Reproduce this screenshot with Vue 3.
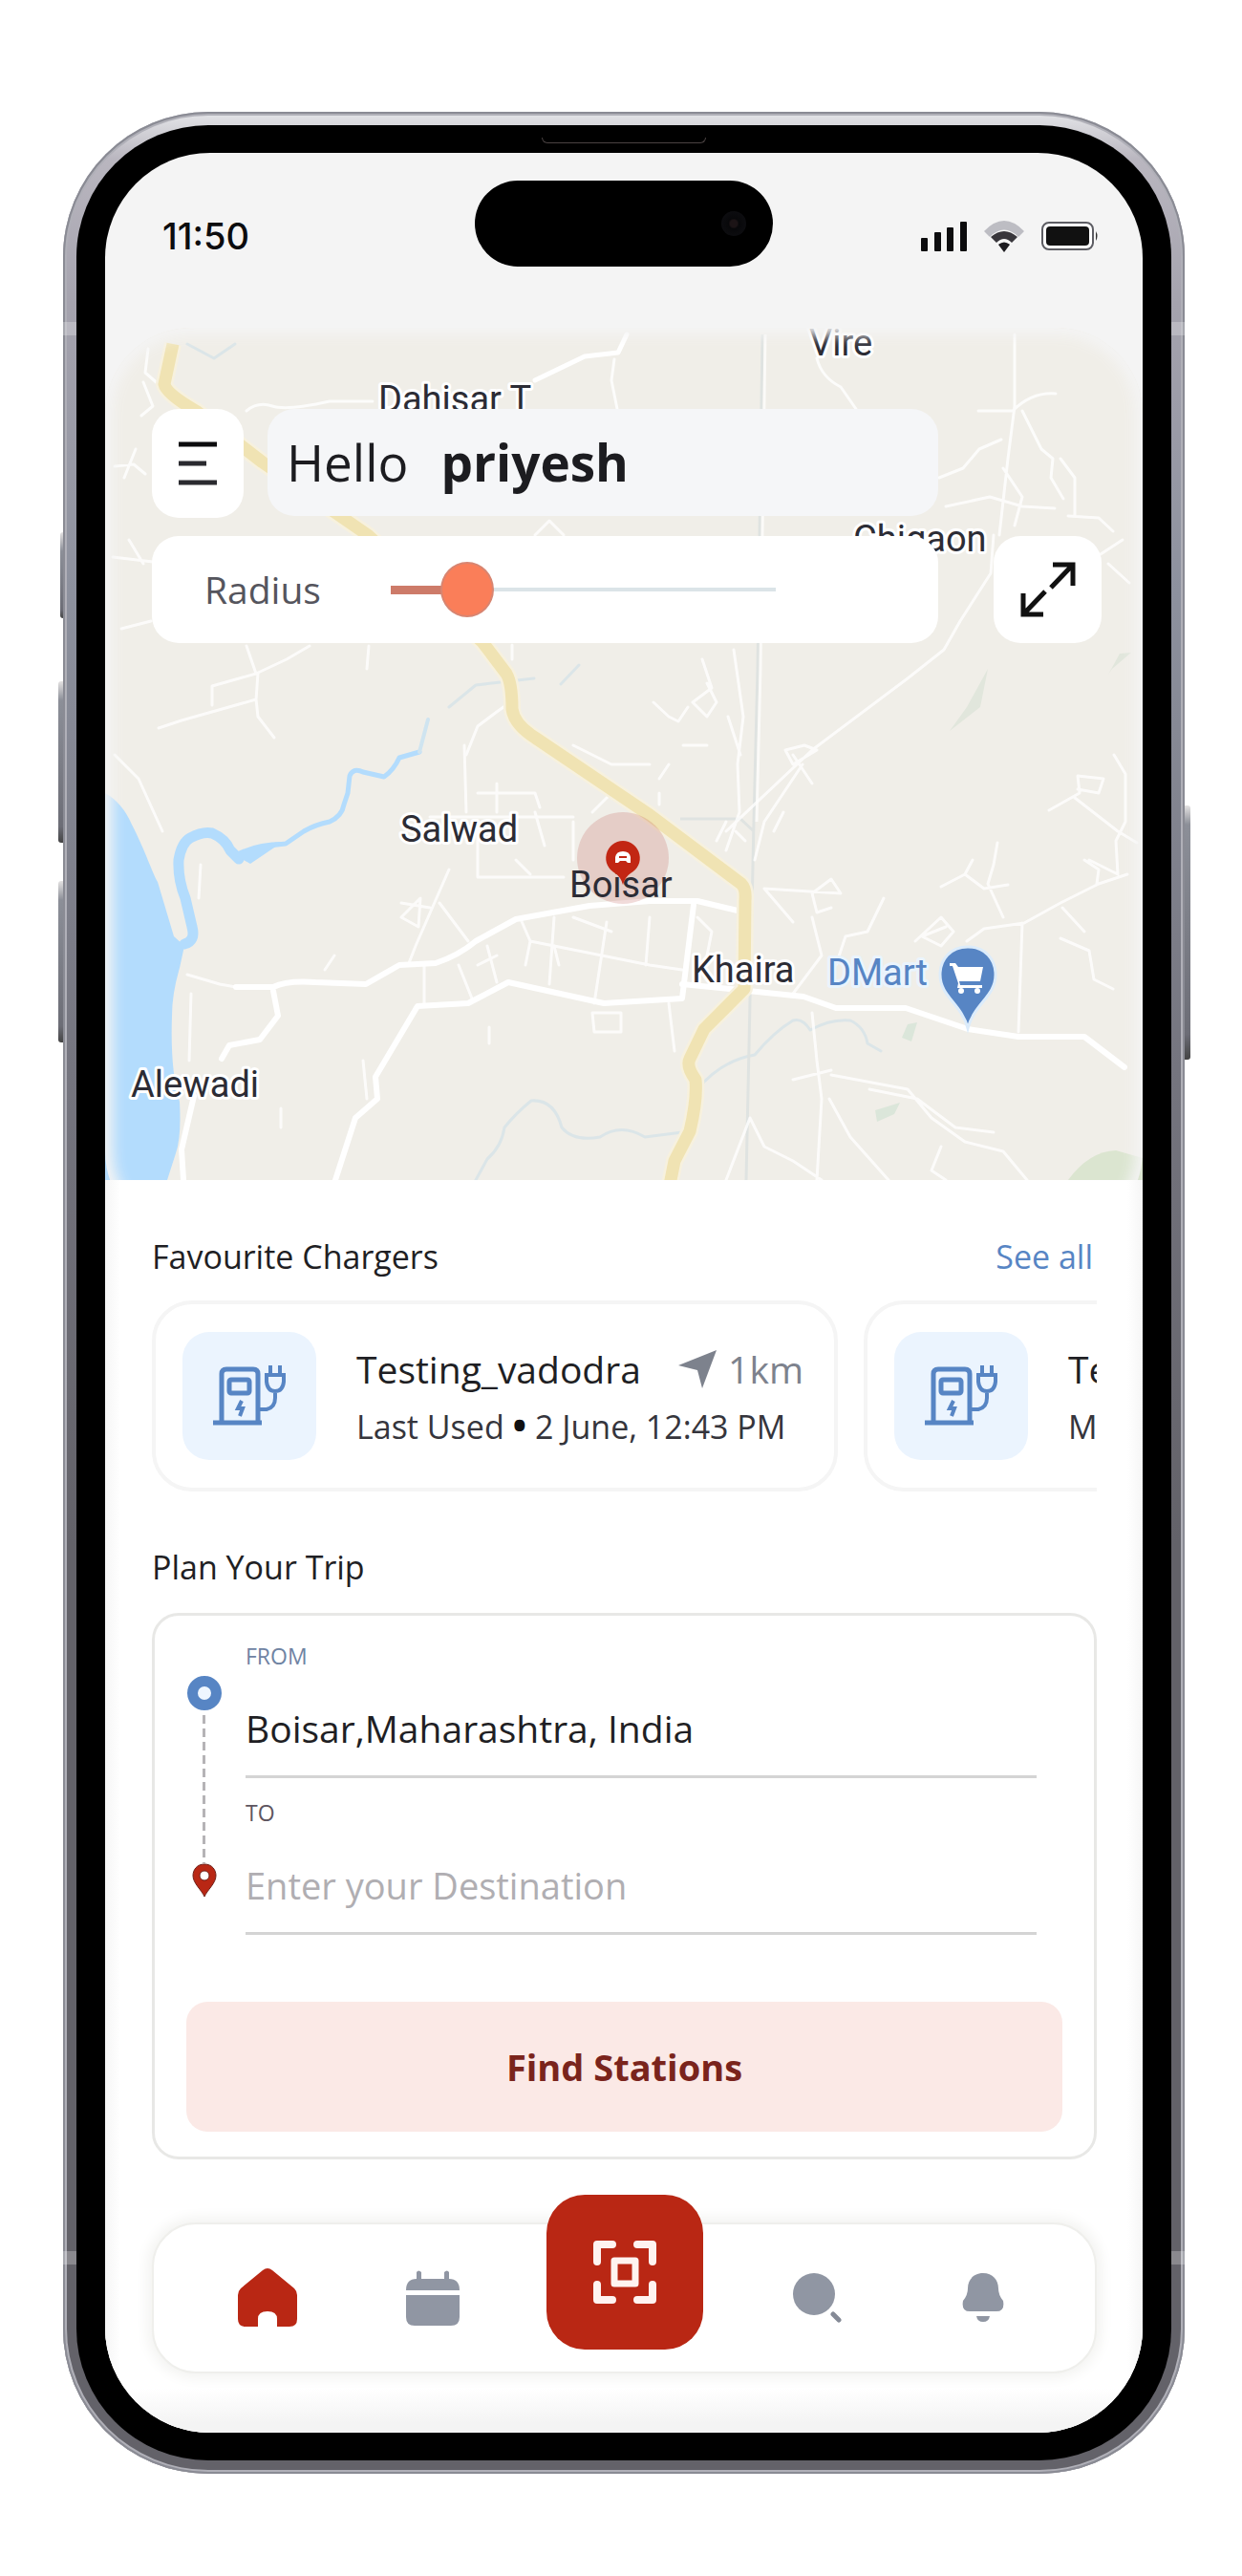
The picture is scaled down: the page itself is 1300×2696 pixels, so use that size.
<script setup>
import { ref } from 'vue'

const radius = ref(15)
const from = ref('Boisar,Maharashtra, India')
const to = ref('')

const chargers = [
  { name: 'Testing_vadodra', distance: '1km', detail: 'Last Used', when: '2 June, 12:43 PM' },
  { name: 'Testing_mumbai', distance: '3km', detail: 'Mostly Used', when: '1 June, 10:20 AM' },
]
</script>

<template>
  <div class="page">
    <div class="phone">
      <span class="side-key mute"></span>
      <span class="side-key vol-up"></span>
      <span class="side-key vol-down"></span>
      <span class="side-key power"></span>
      <span class="band band-top"></span>
      <span class="band band-bottom"></span>
      <div class="bezel">
        <span class="speaker"></span>
        <main class="screen">
          <header class="status">
            <time class="clock">11:50</time>
            <div class="island"><span class="lens"></span></div>
            <div class="indicators">
              <svg width="48" height="32" viewBox="0 0 48 32" fill="#0c0c0e">
                <rect x="0" y="18" width="7" height="14" rx="1" /><rect x="14" y="12" width="7" height="20" rx="1" /><rect x="27" y="7" width="7" height="25" rx="1" /><rect x="41" y="1" width="7" height="31" rx="1" />
              </svg>
              <svg width="44" height="34" viewBox="0 0 44 34">
                <path d="M1 12Q22-10 43 12L37 18Q22 3 7 18Z" fill="#bdbdc3" />
                <path d="M8 18Q22 6 36 18L30 24Q22 16 14 24Z" fill="#38363b" />
                <path d="M16 26Q22 21 28 26L22 34Z" fill="#1c1b1f" />
              </svg>
              <svg width="60" height="32" viewBox="0 0 60 32">
                <rect x="1" y="2" width="53" height="28" rx="7" fill="#fff" stroke="#5d5d63" stroke-width="2" />
                <rect x="5" y="6" width="45" height="20" rx="4" fill="#111" />
                <path d="M57 11Q60 16 57 21Z" fill="#333" />
              </svg>
            </div>
          </header>

          <section class="map">
            <svg class="map-art" viewBox="110 343 1086 892" preserveAspectRatio="xMidYMid slice">
              <rect x="110" y="343" width="1086" height="892" fill="#f0eee8" />
              <path d="M1118 1235Q1140 1205 1168 1204L1196 1212V1235Z" fill="#dbe5d0" />
              <path d="M916 1162L942 1154L936 1166L918 1174ZM950 1072L960 1070L954 1090L944 1086Z" fill="#dbe6da" />
              <path d="M1034 700L1026 740L994 765L1012 740ZM1184 683L1164 700L1160 706L1172 684Z" fill="#e1e6dc" />
              <path d="M110 830Q128 840 138 863C152 890 160 915 165 923L182 980L193 990L188 1013Q180 1040 180 1063Q178 1120 188 1153Q190 1190 184 1207L175 1235H110Z" fill="#b3dcfd" />
              <g fill="none" stroke="#b3dcfd" stroke-linecap="round" stroke-linejoin="round">
                <path stroke-width="11" d="M193 988Q205 985 201 970L194 940Q186 920 187 900Q190 882 199 877Q212 870 222 872Q236 878 241 890L250 899" />
                <path stroke-width="5" d="M250 899Q275 884 299 883L318 870Q330 863 345 860Q358 854 360 842L364 830L366 812Q370 803 380 808L402 813Q412 806 418 793L439 787" />
                <path stroke-width="4" stroke="#cfe4f0" d="M439 787L448 753" />
                <path stroke-width="3" stroke="#dbe5e8" d="M470 740L498 717L559 710M587 716L606 696M196 360L224 375L246 360M498 1235L510 1213Q525 1200 528 1180Q540 1165 556 1152Q580 1150 588 1180Q600 1195 628 1190Q650 1175 675 1190L722 1184M730 1140Q755 1110 790 1104Q810 1080 830 1068Q840 1065 848 1078Q870 1066 890 1068Q905 1075 908 1092L922 1100" />
              </g>
              <path d="M244 894Q266 881 296 881L262 904Z" fill="#b3dcfd" />
              <path d="M798 350L793 700L789 860L781 1235M712 857H775L789 870" fill="none" stroke="#dfe3e1" stroke-width="3" />
              <path d="M801 350L796 700L792 860" fill="none" stroke="#fff" stroke-width="3" opacity=".7" />
              <g fill="none" stroke="#fff" stroke-width="3" stroke-linejoin="round" stroke-linecap="round" opacity=".8">
                <path d="M155 365L152 390L168 404M150 400L160 425L148 435M120 488L140 486L152 496M142 470L130 500M258 430Q270 420 285 425Q300 430 345 420H390M643 376L640 398L646 428M118 583L160 588M135 565L150 590M127 658L158 650M258 676L268 705L222 718L222 738M268 705L300 690L324 676M166 762L190 754L268 732L270 705M268 732L270 750L287 772M386 676L384 700M536 675V690M488 790L500 760L520 745L534 735M560 560L575 545L590 560M855 375Q860 395 880 405L896 428M1062 350V425L1055 480L1046 560M1024 430H1060Q1080 410 1105 412M1070 430L1090 470L1102 480L1100 500L1113 522M1110 480L1125 500L1125 540M1048 460L1025 470L1008 490L983 500M990 530L1036 520L1070 530L1104 532M1050 490L1070 520L1062 550M1118 540L1150 542L1165 556M1152 580L1175 565M1160 590L1182 610" />
                <path d="M1040 560L1037 600L1005 650L988 680L950 710L850 785L760 870M735 690L745 720L725 735L740 750L750 735L740 715M720 740L710 755L700 750L684 735M768 680L778 750L772 800L774 850L760 890M762 750L775 790M120 790L145 815L170 870M210 905L208 940M486 780L488 850M450 855H600M500 860V918H590M470 910L435 990L428 1008M420 945L450 950M460 945L490 985M440 940L438 970L420 960ZM480 1010L494 1045M444 1010V1050M510 990L520 1028M545 962L555 985L680 1010L714 1015M635 965L622 1050M555 985L550 1010M580 960L575 1030M680 960L676 1010M840 800L800 860L790 900M830 790L850 820M855 785L830 800L822 785L842 780Z" />
                <path d="M1166 790L1178 810L1178 860L1168 880L1170 915M1125 835L1170 870L1190 882M1098 848L1130 830L1128 812L1155 815L1150 830L1128 826M1012 985L1030 972L1072 966L1110 945L1150 925L1180 915M1135 900L1150 910L1148 925M1140 900L1170 915M1044 882L1040 905L1034 925L1050 960M985 928L1010 915L1030 930L1055 926M1010 915L1018 900M1112 950L1135 975M1110 982L1140 995L1145 1025L1165 1035M1070 966L1066 1080M800 930L880 935L870 920L850 935L855 955L870 950M800 930L830 965M850 960L860 1000L830 1040M925 940L908 975L885 980L875 1010M958 985L985 960L998 975L985 990L965 980L990 970M850 1060L855 1110L860 1150L855 1235M830 1130L870 1120M870 1125L950 1140L975 1170L1010 1195L1050 1205L1075 1235M910 1140L960 1150L1000 1180L1040 1185M785 1170L760 1235M785 1170L800 1200L830 1215L860 1235M868 1150L890 1190L930 1235M985 1200L975 1225L990 1235M700 1050L706 1100M196 1020L230 1030L247 1033M200 1040L198 1110M512 1075V1092M380 1110L384 1150M294 1160V1180M620 1060H650V1080H622Z" />
                <path d="M500 830H560L565 845M520 820V850M600 780L640 800H680M640 830L620 850M690 830V842M600 860V900M560 850L570 885M730 960L745 975L740 1000M760 860L750 880M600 960L640 975M580 990L585 1010M770 870L780 880M715 780H740M820 850L810 870M520 1000L500 1010M350 1000L340 1015M540 900L555 915M700 800L690 815" />
              </g>
              <g fill="none" stroke="#fff" stroke-width="6" stroke-linejoin="round" stroke-linecap="round">
                <path d="M560 398L612 373L647 369L656 350" stroke-width="5" />
                <path d="M247 1033L286 1033Q300 1026 330 1028L383 1030L418 1010L456 1008Q480 1000 498 985L540 962L617 948L680 943L730 943L772 953" />
                <path d="M192 1235L190 1203L203 1147M232 1108L240 1094L272 1088L291 1063L286 1037M351 1235L372 1170L395 1150L393 1127L437 1053L490 1050L532 1028L632 1050L714 1045L726 947M714 1030L783 1037L841 1043L875 1055L948 1055L1013 1077L1066 1085H1135L1177 1117" />
              </g>
              <g fill="none" stroke-linejoin="round">
                <path stroke="#f7f1de" stroke-width="18" d="M181 360L172 402Q174 412 205 430L275 484L385 560L505 672L530 705Q536 715 536 742Q538 758 560 772L680 853L776 925Q781 930 780 942L779 1035L737 1077L722 1108Q718 1116 728 1130Q730 1150 722 1184L706 1215L701 1240" />
                <path stroke="#f0e3b3" stroke-width="13" d="M181 360L172 402Q174 412 205 430L275 484L385 560L505 672L530 705Q536 715 536 742Q538 758 560 772L680 853L776 925Q781 930 780 942L779 1035L737 1077L722 1108Q718 1116 728 1130Q730 1150 722 1184L706 1215L701 1240" />
              </g>
              <circle cx="652" cy="898" r="48" fill="#b94a48" fill-opacity=".2" />
              <g class="place">
                <text x="847" y="372">Vire</text>
                <text x="396" y="431">Dahisar T</text>
                <text x="893" y="577">Chigaon</text>
                <text x="419" y="881">Salwad</text>
                <text x="596" y="939" class="plain">Boisar</text>
                <text x="724" y="1028">Khaira</text>
                <text x="137" y="1148">Alewadi</text>
                <text x="866" y="1031" class="shop">DMart</text>
              </g>
              <path d="M652 880a18 18 0 0 1 8 34Q654 918 652 926Q650 918 644 914A18 18 0 0 1 652 880Z" fill="#c22613" />
              <path d="M644 903V897Q645 891 652 891T660 897V903H657L655 901H649L647 903ZM648 896H656V898H648Z" fill="#fff" fill-rule="evenodd" />
              <path d="M1013 991C1031 991 1042 1004 1042 1020C1042 1043 1020 1050 1013 1076C1006 1050 984 1043 984 1020C984 1004 995 991 1013 991Z" fill="#5785c4" stroke="#dcecfb" stroke-width="3" />
              <path d="M994 1008H1000L1003 1012H1029L1026 1027H1004L1005 1031H1028V1034H1002L1003 1029L997 1011H994Z" fill="#fff" />
              <circle cx="1006" cy="1037" r="3" fill="#fff" /><circle cx="1023" cy="1037" r="3" fill="#fff" />
            </svg>
            <div class="controls">
              <div class="greeting-row">
                <button class="tile menu" aria-label="Menu">
                  <svg width="40" height="46" viewBox="0 0 40 46" fill="none" stroke="#2a2a2f" stroke-width="5"><path d="M0 3H40" stroke="#0c0c0e" /><path d="M0 23H29M0 43H40" /></svg>
                </button>
                <h1 class="greeting">Hello <strong>priyesh</strong></h1>
              </div>
              <div class="radius-row">
                <div class="radius-box">
                  <label for="radius">Radius</label>
                  <input id="radius" v-model="radius" type="range" min="0" max="100" />
                </div>
                <button class="tile expand" aria-label="Expand map">
                  <svg width="58" height="58" viewBox="0 0 58 58" fill="none" stroke="#111" stroke-width="5"><path d="M34 3H55V25M55 3L32 27M24 55H3V33M3 55L26 31" /></svg>
                </button>
              </div>
            </div>
          </section>

          <div class="content">
            <section>
              <div class="section-head">
                <h2>Favourite Chargers</h2>
                <a href="#">See all</a>
              </div>
              <div class="charger-strip">
                <article v-for="c in chargers" :key="c.name" class="charger">
                  <div class="charger-icon">
                    <svg width="76" height="64" viewBox="0 0 76 64" fill="none" stroke="#5785c4" stroke-width="5">
                      <path d="M0 60H51M9 60V9Q9 4 14 4H42Q47 4 47 9V60" />
                      <rect x="17" y="15" width="21" height="14" rx="2" />
                      <path stroke-width="4" d="M30 37L26 45H31L28 53" />
                      <path stroke-width="4" d="M47 46H56Q65 44 65 34V27M56 10H74V17Q73 27 65 27T56 17ZM60 0V9M70 0V9" />
                    </svg>
                  </div>
                  <div class="charger-info">
                    <div class="charger-title">
                      <h3>{{ c.name }}</h3>
                      <span class="distance">
                        <svg width="40" height="40" viewBox="0 0 40 40"><path d="M0 16L40 0L25 40L20 21Z" fill="#7d828d" /></svg>
                        {{ c.distance }}
                      </span>
                    </div>
                    <p>{{ c.detail }} <b class="bullet">•</b> {{ c.when }}</p>
                  </div>
                </article>
              </div>
            </section>

            <section>
              <div class="section-head trip-head"><h2>Plan Your Trip</h2></div>
              <form class="trip" @submit.prevent>
                <div class="route">
                  <div class="rail">
                    <span class="origin"></span>
                    <span class="dash"></span>
                    <svg width="26" height="36" viewBox="0 0 26 36"><path d="M13 1C21 1 25 7 25 13C25 21 16 28 13 35C10 28 1 21 1 13C1 7 5 1 13 1ZM13 8A5 5 0 1 0 13 18A5 5 0 1 0 13 8Z" fill="#b92714" stroke="#6e2119" /></svg>
                  </div>
                  <div class="fields">
                    <label for="from" class="from-label">FROM</label>
                    <input id="from" v-model="from" type="text" />
                    <label for="to">TO</label>
                    <input id="to" v-model="to" type="text" placeholder="Enter your Destination" />
                  </div>
                </div>
                <button class="find" type="submit">Find Stations</button>
              </form>
            </section>

            <nav class="tabs">
              <div class="tab-group">
                <button aria-label="Home">
                  <svg width="62" height="64" viewBox="0 0 62 64"><path d="M26 3Q31-1 36 3L59 22Q62 25 62 29V54Q62 62 54 62H41V54Q41 46 31 46T21 54V62H8Q0 62 0 54V29Q0 25 3 22Z" fill="#b92714" /></svg>
                </button>
                <button aria-label="Bookings">
                  <svg width="56" height="58" viewBox="0 0 56 58" fill="#9096a3"><path d="M11 2Q13-1 16 2V9H40V2Q43-1 45 2V9Q56 9 56 21H0Q0 9 11 9ZM0 26H56V49Q56 58 47 58H9Q0 58 0 49Z" /></svg>
                </button>
              </div>
              <button class="scan" aria-label="Scan">
                <svg width="68" height="68" viewBox="0 0 68 68" fill="none" stroke="#fff3f0" stroke-width="8" stroke-linecap="round" stroke-linejoin="round"><path d="M5 23V5H21M47 5H63V23M63 47V63H47M21 63H5V47" /><rect x="23" y="22" width="22" height="24" stroke-width="7" /></svg>
              </button>
              <div class="tab-group right">
                <button aria-label="Search">
                  <svg width="52" height="52" viewBox="0 0 52 52"><circle cx="22" cy="22" r="22" fill="#9096a3" /><path d="M42 43L48 49" stroke="#858a96" stroke-width="5" stroke-linecap="round" /></svg>
                </button>
                <button aria-label="Notifications">
                  <svg width="44" height="52" viewBox="0 0 44 52" fill="#9096a3"><path d="M22 0C32 0 38 7 38 16Q38 23 43 29Q45 40 36 40H8Q-1 40 1 29Q6 23 6 16C6 7 12 0 22 0ZM15 45H29Q28 51 22 51T15 45Z" /></svg>
                </button>
              </div>
            </nav>
          </div>
        </main>
      </div>
    </div>
  </div>
</template>

<style>
body { margin: 0; background: #fff; }
</style>

<style scoped>
* { box-sizing: border-box; }
.page { padding: 117px 60px 106px 66px; font-family: "Open Sans", sans-serif; color: #1f1f24; }
h1, h2, h3, p { margin: 0; font-weight: 400; }
button { border: 0; padding: 0; font: inherit; cursor: pointer; display: flex; align-items: center; justify-content: center; }
svg { display: block; flex: none; }

.phone {
  position: relative;
  padding: 14px;
  border-radius: 152px;
  background: linear-gradient(#e4e5e8 0, #b9b6bf 50px, #a5a3ae 200px, #8d919e 500px, #75757f 1000px, #636269 1500px, #636269 100%);
  box-shadow: inset 0 0 0 2px #8a8b94, inset 0 0 0 4px #b0b0b8;
}
.side-key { position: absolute; left: -5px; width: 5px; border-radius: 3px 0 0 3px; background: linear-gradient(#e4e2e2, #8c8f98 20px, #6c6d76 90%, #444); }
.mute { top: 440px; height: 90px; left: -3px; width: 3px; }
.vol-up { top: 596px; height: 169px; }
.vol-down { top: 805px; height: 169px; }
.power { top: 726px; height: 266px; left: auto; right: -6px; width: 6px; border-radius: 0 3px 3px 0; }
.band { position: absolute; left: 0; right: 0; height: 14px; background: #fff; opacity: .25; }
.band-top { top: 220px; }
.band-bottom { bottom: 219px; }
.bezel { position: relative; padding: 29px 30px; border-radius: 138px; background: #000; }
.speaker { position: absolute; top: 13px; left: 50%; width: 172px; height: 6px; margin-left: -86px; border: 1px solid #4a4242; border-radius: 0 0 6px 6px; border-top: 0; }
.screen { border-radius: 110px; background: #f4f4f4; overflow: hidden; }

.status { display: grid; grid-template-columns: 1fr 312px 1fr; align-items: end; padding: 29px 46px 64px; }
.clock { padding-left: 14px; font-family: Inter, sans-serif; font-size: 38px; line-height: 64px; font-weight: 500; color: #0c0c0e; }
.island { height: 90px; border-radius: 45px; background: #000; display: flex; align-items: center; justify-content: flex-end; padding-right: 28px; }
.lens { width: 26px; height: 26px; border-radius: 50%; background: radial-gradient(#1c1416 0 20%, #08080a 30%, #101014); }
.indicators { display: flex; align-items: center; justify-content: flex-end; gap: 17px; height: 64px; }

.map { position: relative; overflow: hidden; border-radius: 90px 90px 0 0; }
.map::after { content: ""; position: absolute; inset: 0 0 -60px; border-radius: 90px; box-shadow: inset 0 0 14px 8px #f4f4f4; pointer-events: none; }
.map-art { width: 100%; height: auto; }
.place text { font: 400 38px Roboto, sans-serif; fill: #2c2c35; stroke: #fff; stroke-width: 6px; stroke-linejoin: round; paint-order: stroke; }
.place .plain { stroke: none; }
.place .shop { fill: #5785c4; stroke: #eaf4fd; }
.controls { position: absolute; inset: 0; z-index: 1; padding: 85px 43px 0 49px; display: flex; flex-direction: column; gap: 19px; }
.greeting-row { display: flex; gap: 25px; padding-right: 171px; }
.radius-row { display: flex; gap: 58px; }
.tile { background: #fff; border-radius: 28px; }
.menu { width: 96px; height: 114px; }
.expand { width: 113px; height: 112px; }
.greeting { flex: 1; display: flex; align-items: center; gap: 34px; height: 112px; padding-left: 20px; border-radius: 28px; background: #f5f6f8; font-size: 53px; line-height: 64px; color: #1c1c20; }
.greeting strong { font-weight: 700; }
.radius-box { flex: 1; display: flex; align-items: center; height: 112px; padding-left: 55px; border-radius: 28px; background: #fff; }
.radius-box label { width: 195px; font-size: 39px; line-height: 48px; color: #55555d; }
.radius-box input { appearance: none; width: 403px; height: 58px; margin: 0; background: linear-gradient(#cd7b69, #cd7b69) 0 50% / 60px 9px no-repeat, linear-gradient(#dbe4e8, #dbe4e8) 0 50% / 100% 4px no-repeat; }
.radius-box input::-webkit-slider-thumb { appearance: none; width: 56px; height: 58px; border-radius: 50%; border: 2px solid #d88571; background: #fa7e59; }

.content {
  padding: 56px 48px 62px 49px;
  background:
    linear-gradient(to top, #f4f4f4 10px, transparent 46px),
    linear-gradient(to right, #f6f6f6, transparent 16px),
    linear-gradient(to left, #f6f6f6, transparent 16px),
    #fff;
}
.section-head { display: flex; justify-content: space-between; align-items: center; line-height: 48px; font-size: 34px; padding-right: 4px; }
.section-head h2 { font-size: inherit; }
.section-head a { color: #5785c4; text-decoration: none; }
.charger-strip { display: flex; gap: 27px; margin-top: 22px; overflow: hidden; }
.charger { flex: none; width: 718px; height: 200px; display: flex; align-items: center; padding: 0 28px; border: 4px solid #f5f5f5; border-radius: 42px; background: #fff; }
.charger-icon { flex: none; width: 140px; height: 134px; border-radius: 28px; background: #ebf4fe; display: flex; align-items: center; justify-content: center; }
.charger-info { flex: 1; padding: 4px 0 0 42px; white-space: nowrap; }
.charger-title { display: flex; justify-content: space-between; align-items: center; padding-right: 4px; line-height: 60px; font-size: 39px; }
.charger-title h3 { font-size: inherit; }
.distance { display: flex; align-items: center; gap: 12px; color: #7d828d; }
.charger-info p { font-size: 34px; line-height: 60px; color: #35353c; }
.bullet { font-size: 39px; line-height: 48px; color: #111; }

.trip-head { margin-top: 55px; }
.trip { margin-top: 24px; padding: 20px 33px 26px 33px; border: 3px solid #e8e8e6; border-radius: 28px; background: #fff; }
.route { display: flex; padding-right: 27px; }
.rail { width: 62px; display: flex; flex-direction: column; align-items: center; padding: 43px 25px 0 0; }
.origin { width: 36px; height: 36px; border-radius: 50%; border: 11px solid #5785c4; background: #eef6ff; }
.dash { width: 3px; height: 160px; background: repeating-linear-gradient(transparent 0 5px, #b5b3b6 5px 14px); }
.fields { flex: 1; display: flex; flex-direction: column; }
.fields label { font-size: 23px; line-height: 44px; color: #5d5560; }
.fields .from-label { color: #6f83a3; }
.fields input { height: 106px; margin-bottom: 14px; padding: 4px 0 0; border: 0; border-bottom: 3px solid #d4d4d4; background: none; font: 400 39px/48px "Open Sans", sans-serif; color: #1f1f24; outline: 0; }
.fields input::placeholder { color: #b0aeb2; opacity: 1; font-size: 38px; }
.find { width: 100%; height: 136px; margin-top: 56px; border-radius: 22px; background: #fbe9e6; color: #7a241c; font-size: 38px; font-weight: 700; }

.tabs { display: flex; height: 158px; margin-top: 66px; border: 2px solid #efefec; border-radius: 46px; background: #fff; box-shadow: 0 0 14px 5px #f3f3f1; }
.tab-group { flex: 1; display: flex; padding: 0 32px; }
.tab-group.right { padding: 0 30px 0 34px; }
.tab-group button { flex: 1; background: none; }
.scan { position: relative; top: -31px; width: 164px; height: 162px; border-radius: 40px; background: #b92714; }
</style>
